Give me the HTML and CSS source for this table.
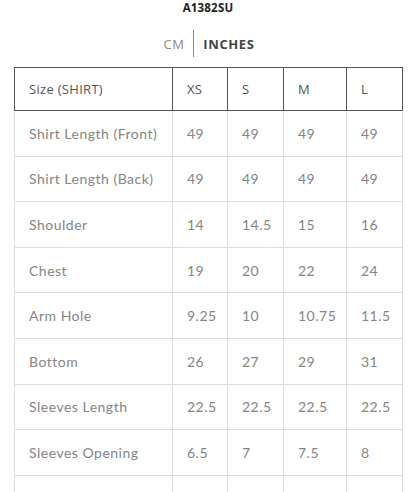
FILE: index.html
```html
<!DOCTYPE html>
<html>
<head>
<meta charset="utf-8">
<link rel="stylesheet" href="styles.css">
</head>
<body>
<div class="page">
  <div class="title">A1382SU</div>
  <div class="units">
    <span class="unit">CM</span>
    <span class="divider"></span>
    <span class="unit active">INCHES</span>
  </div>
  <table class="sizes">
    <colgroup>
      <col class="c-name"><col class="c-xs"><col class="c-s"><col class="c-m"><col class="c-l">
    </colgroup>
    <thead>
      <tr><th>Size (SHIRT)</th><th>XS</th><th>S</th><th>M</th><th>L</th></tr>
    </thead>
    <tbody>
      <tr><td>Shirt Length (Front)</td><td>49</td><td>49</td><td>49</td><td>49</td></tr>
      <tr><td>Shirt Length (Back)</td><td>49</td><td>49</td><td>49</td><td>49</td></tr>
      <tr><td>Shoulder</td><td>14</td><td>14.5</td><td>15</td><td>16</td></tr>
      <tr><td>Chest</td><td>19</td><td>20</td><td>22</td><td>24</td></tr>
      <tr><td>Arm Hole</td><td>9.25</td><td>10</td><td>10.75</td><td>11.5</td></tr>
      <tr><td>Bottom</td><td>26</td><td>27</td><td>29</td><td>31</td></tr>
      <tr><td>Sleeves Length</td><td>22.5</td><td>22.5</td><td>22.5</td><td>22.5</td></tr>
      <tr><td>Sleeves Opening</td><td>6.5</td><td>7</td><td>7.5</td><td>8</td></tr>
      <tr><td>&nbsp;</td><td></td><td></td><td></td><td></td></tr>
    </tbody>
  </table>
</div>
</body>
</html>
```
FILE: styles.css
```css
html, body {
  margin: 0;
  padding: 0;
  background: #ffffff;
}
.page {
  padding: 0 14px;
  font-family: Lato, "Open Sans", sans-serif;
}
.title {
  text-align: center;
  font-family: "Open Sans", Lato, sans-serif;
  font-weight: 700;
  font-size: 11.5px;
  line-height: 16px;
  color: #222;
  letter-spacing: 0.2px;
}
.units {
  display: flex;
  justify-content: center;
  align-items: center;
  gap: 9px;
  margin-top: 14px;
  height: 27px;
  padding-left: 2px;
}
.unit {
  font-family: "Open Sans", Lato, sans-serif;
  font-size: 13px;
  color: #8a8a8a;
  letter-spacing: 0.5px;
}
.unit.active {
  font-weight: 700;
  color: #444;
  letter-spacing: 0.6px;
}
.divider {
  width: 1px;
  height: 27px;
  background: #8a8a8a;
}
.sizes {
  margin-top: 10px;
  width: 388px;
  table-layout: fixed;
  border-collapse: collapse;
}
.c-name { width: 158px; }
.c-xs { width: 55px; }
.c-s { width: 56px; }
.c-m { width: 63px; }
.c-l { width: 56px; }
.sizes th {
  border: 1px solid #555;
  height: 42px;
  padding: 0 0 0 14px;
  text-align: left;
  font-family: "Open Sans", Lato, sans-serif;
  font-weight: 400;
  font-size: 13px;
  color: #555;
  letter-spacing: 0.3px;
}
.sizes td {
  border: 1px solid #dedede;
  height: 44.6px;
  padding: 0 0 0 14px;
  text-align: left;
  font-size: 14px;
  color: #858585;
  letter-spacing: 0.5px;
}
```
